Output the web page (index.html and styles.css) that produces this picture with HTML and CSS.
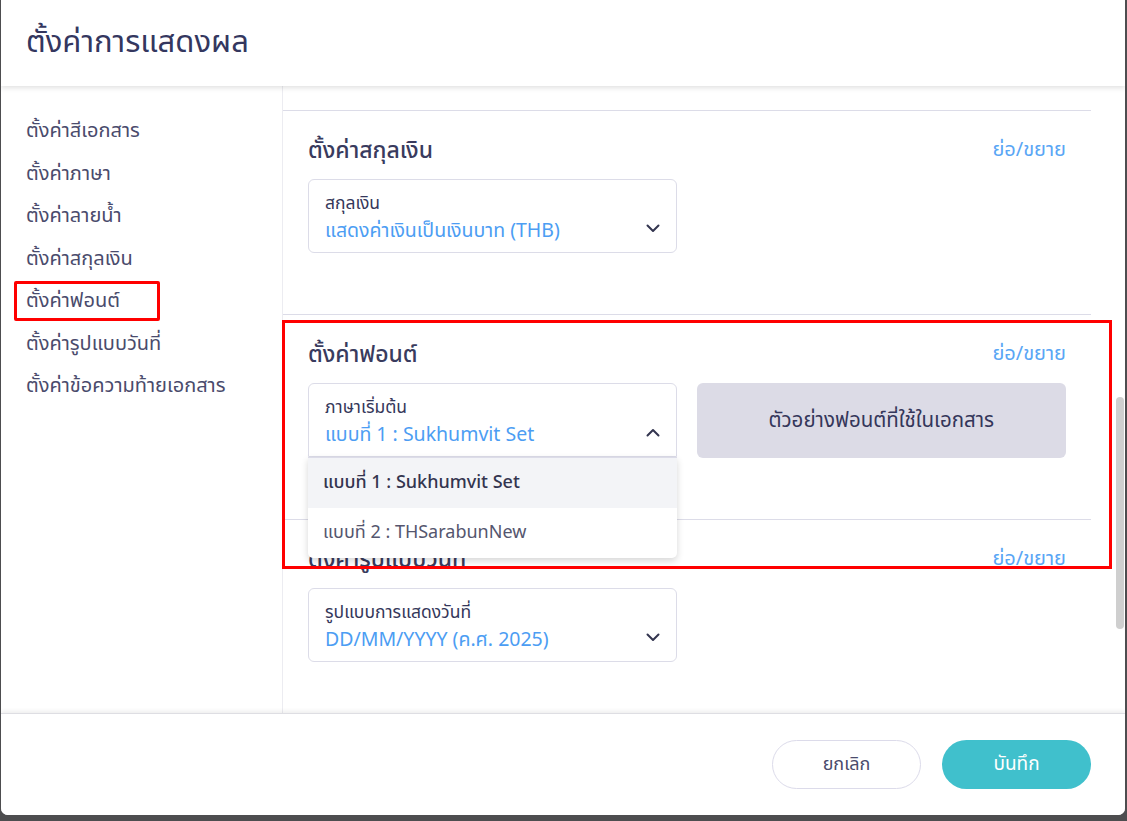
FILE: index.html
```html
<!DOCTYPE html>
<html lang="th">
<head>
  <meta charset="UTF-8">
  <meta name="viewport" content="width=device-width, initial-scale=1.0">
  <title>ตั้งค่าการแสดงผล</title>
  <link rel="stylesheet" href="styles.css">
</head>
<body>
  <div class="modal">
    <div class="modal-header">
      <h1>ตั้งค่าการแสดงผล</h1>
    </div>

    <div class="modal-body">
      <ul class="side-nav">
        <li>ตั้งค่าสีเอกสาร</li>
        <li>ตั้งค่าภาษา</li>
        <li>ตั้งค่าลายน้ำ</li>
        <li>ตั้งค่าสกุลเงิน</li>
        <li class="marked">ตั้งค่าฟอนต์</li>
        <li>ตั้งค่ารูปแบบวันที่</li>
        <li>ตั้งค่าข้อความท้ายเอกสาร</li>
      </ul>

      <div class="content">
        <div class="scroll-top"></div>

        <div class="section">
          <div class="section-head">
            <h2>ตั้งค่าสกุลเงิน</h2>
            <a class="toggle">ย่อ/ขยาย</a>
          </div>
          <div class="row">
            <div class="select">
              <div class="select-label">สกุลเงิน</div>
              <div class="select-value">
                <span>แสดงค่าเงินเป็นเงินบาท (THB)</span>
                <svg class="chevron" width="14" height="9" viewBox="0 0 14 9"><path d="M1.5 1.5 L7 7 L12.5 1.5" fill="none" stroke="#33354f" stroke-width="2" stroke-linecap="round" stroke-linejoin="round"/></svg>
              </div>
            </div>
          </div>
        </div>

        <div class="section section-open">
          <div class="highlight"></div>
          <div class="section-head">
            <h2>ตั้งค่าฟอนต์</h2>
            <a class="toggle">ย่อ/ขยาย</a>
          </div>
          <div class="row">
            <div class="select open">
              <div class="select-label">ภาษาเริ่มต้น</div>
              <div class="select-value">
                <span>แบบที่ 1 : Sukhumvit Set</span>
                <svg class="chevron" width="14" height="9" viewBox="0 0 14 9"><path d="M1.5 7.5 L7 2 L12.5 7.5" fill="none" stroke="#33354f" stroke-width="2" stroke-linecap="round" stroke-linejoin="round"/></svg>
              </div>
              <ul class="dropdown">
                <li class="selected">แบบที่ 1 : Sukhumvit Set</li>
                <li>แบบที่ 2 : THSarabunNew</li>
              </ul>
            </div>
            <div class="preview">ตัวอย่างฟอนต์ที่ใช้ในเอกสาร</div>
          </div>
        </div>

        <div class="section">
          <div class="section-head">
            <h2>ตั้งค่ารูปแบบวันที่</h2>
            <a class="toggle">ย่อ/ขยาย</a>
          </div>
          <div class="row">
            <div class="select">
              <div class="select-label">รูปแบบการแสดงวันที่</div>
              <div class="select-value">
                <span>DD/MM/YYYY (ค.ศ. 2025)</span>
                <svg class="chevron" width="14" height="9" viewBox="0 0 14 9"><path d="M1.5 1.5 L7 7 L12.5 1.5" fill="none" stroke="#33354f" stroke-width="2" stroke-linecap="round" stroke-linejoin="round"/></svg>
              </div>
            </div>
          </div>
        </div>
      </div>

      <div class="scrollbar">
        <div class="thumb"></div>
      </div>
    </div>

    <div class="modal-footer">
      <button class="btn btn-cancel">ยกเลิก</button>
      <button class="btn btn-save">บันทึก</button>
    </div>
  </div>
</body>
</html>
```

FILE: styles.css
```css
body {
  margin: 0;
  padding: 0;
  background-color: #4d4d4f;
  font-family: "Noto Sans", "Noto Sans Thai", "DejaVu Sans", sans-serif;
  color: #3b3c5e;
}
.modal {
  margin-left: 1px;
  width: 1124px;
  height: 815px;
  background-color: #fff;
  border-radius: 0 0 7px 7px;
  display: flex;
  flex-direction: column;
  overflow: hidden;
}
.modal-header {
  height: 86px;
  flex-shrink: 0;
  padding-left: 25px;
  display: flex;
  align-items: center;
  box-shadow: 0 2px 5px rgba(0, 0, 0, 0.12);
  position: relative;
  z-index: 3;
  background-color: #fff;
}
.modal-header h1 {
  margin: 0;
  font-size: 31px;
  font-weight: 400;
  color: #34375f;
  padding-bottom: 2px;
}
.modal-body {
  flex: 1;
  display: flex;
  min-height: 0;
}
.side-nav {
  list-style: none;
  margin: 0;
  padding: 23px 0 0 25px;
  width: 256px;
  border-right: 1px solid #ececf1;
  flex-shrink: 0;
}
.side-nav li {
  font-size: 20px;
  line-height: 42.5px;
  color: #4a4b6c;
}
.side-nav li.marked {
  position: relative;
}
.side-nav li.marked::after {
  content: "";
  position: absolute;
  left: -12px;
  top: 2px;
  width: 140px;
  height: 34px;
  border: 3px solid #ff0000;
  border-radius: 2px;
}
.content {
  width: 808px;
  flex-shrink: 0;
}
.scroll-top {
  height: 24px;
}
.section {
  border-top: 1px solid #dcdce8;
  padding: 25px 25px 61px 25px;
  position: relative;
}
.section-head {
  display: flex;
  justify-content: space-between;
  align-items: center;
  height: 28px;
}
.section-head h2 {
  margin: 0;
  font-size: 23px;
  font-weight: 500;
  color: #393b5e;
}
.toggle {
  font-size: 20px;
  font-weight: 400;
  color: #5aa6f5;
  cursor: pointer;
}
.row {
  display: flex;
  gap: 20px;
  margin-top: 15px;
}
.select {
  width: 369px;
  height: 74px;
  box-sizing: border-box;
  border: 1px solid #dcdce8;
  border-radius: 6px;
  padding: 11px 16px 0 16px;
  position: relative;
}
.select.open {
  border-radius: 6px 6px 0 0;
}
.select-label {
  font-size: 17.5px;
  line-height: 22px;
  color: #35375a;
}
.select-value {
  margin-top: 4px;
  display: flex;
  justify-content: space-between;
  align-items: center;
  font-size: 19.5px;
  line-height: 26px;
  color: #4c9df3;
}
.chevron {
  margin-top: -3px;
}
.dropdown {
  list-style: none;
  margin: 0;
  padding: 0;
  position: absolute;
  left: -1px;
  top: 73px;
  width: 369px;
  background-color: #fff;
  border-top: 1px solid #dcdce8;
  border-radius: 0 0 5px 5px;
  box-shadow: 0 3px 7px rgba(0, 0, 0, 0.16);
  z-index: 5;
  overflow: hidden;
}
.dropdown li {
  height: 50px;
  line-height: 47px;
  padding-left: 15px;
  font-size: 18px;
  color: #55566e;
}
.dropdown li.selected {
  background-color: #f3f4f7;
  color: #33354f;
  font-weight: 500;
}
.preview {
  width: 370px;
  height: 75px;
  background-color: #dcdbe6;
  border-radius: 6px;
  display: flex;
  align-items: center;
  justify-content: center;
  font-size: 20.5px;
  color: #34365a;
}
.highlight {
  position: absolute;
  left: -1px;
  top: 5px;
  width: 824px;
  height: 243px;
  border: 3px solid #ff0000;
  z-index: 6;
  pointer-events: none;
}
.scrollbar {
  flex: 1;
  display: flex;
  justify-content: flex-end;
  padding-top: 311px;
  padding-right: 1px;
}
.thumb {
  width: 8px;
  height: 232px;
  background-color: #cfcfcf;
  border-radius: 4px;
}
.modal-footer {
  height: 101px;
  flex-shrink: 0;
  border-top: 1px solid #dedee3;
  box-shadow: 0 -2px 4px rgba(0, 0, 0, 0.07);
  background-color: #fff;
  display: flex;
  align-items: center;
  justify-content: flex-end;
  gap: 21px;
  padding-right: 34px;
  position: relative;
  z-index: 7;
}
.btn {
  width: 149px;
  height: 49px;
  border-radius: 25px;
  font-family: inherit;
  font-size: 18px;
  cursor: pointer;
}
.btn-cancel {
  background-color: #fff;
  border: 1px solid #dcdbea;
  color: #4a4b6c;
}
.btn-save {
  background-color: #40c0cc;
  border: none;
  color: #fff;
  font-size: 19px;
}
```
